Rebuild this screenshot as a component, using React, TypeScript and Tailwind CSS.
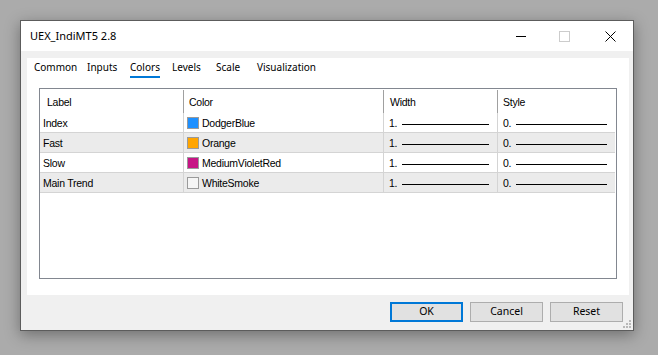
import React from "react";

const ui = { fontFamily: '"Segoe UI", "Noto Sans", "Liberation Sans", sans-serif' };
const tbl = { fontFamily: 'Tahoma, "Liberation Sans", sans-serif' };

const rows = [
  { label: "Index", color: "#1e90ff", name: "DodgerBlue" },
  { label: "Fast", color: "#ffa500", name: "Orange" },
  { label: "Slow", color: "#c71585", name: "MediumVioletRed" },
  { label: "Main Trend", color: "#f5f5f5", name: "WhiteSmoke" },
];

function LineCell({ v }: { v: string }) {
  return (
    <div className="flex items-center h-full pl-[5px] pr-[8px] pt-[3px]">
      <span className="w-[13px]">{v}</span>
      <div className="flex-1 h-px bg-black" />
    </div>
  );
}

export default function App() {
  return (
    <div className="w-[658px] h-[355px] bg-[#ababab] pl-[20px] pt-[20px] overflow-hidden">
      <div
        className="relative w-[614px] h-[311px] border border-[#5c5c5c] bg-[#f0f0f0] flex flex-col shadow-[0_4px_14px_rgba(0,0,0,0.35)]"
        style={ui}
      >
        {/* title bar */}
        <div className="h-[30px] bg-white flex items-center text-[11px] text-black">
          <span className="pl-[9px] flex-1">UEX_IndiMT5 2.8</span>
          <div className="w-[46px] h-full flex items-center justify-center pl-[6px]">
            <svg width="10" height="10"><line x1="0" y1="5.5" x2="10" y2="5.5" stroke="#000" strokeWidth="1" /></svg>
          </div>
          <div className="w-[46px] h-full flex items-center justify-center">
            <svg width="11" height="11"><rect x="0.5" y="0.5" width="10" height="10" fill="none" stroke="#cccccc" /></svg>
          </div>
          <div className="w-[46px] h-full flex items-center justify-center">
            <svg width="11" height="11"><path d="M0.5 0.5 L10.5 10.5 M10.5 0.5 L0.5 10.5" stroke="#000" strokeWidth="1" /></svg>
          </div>
        </div>

        {/* panel */}
        <div className="ml-[6px] mr-[4px] mt-[7px] h-[237px] bg-white flex flex-col">
          <div className="h-[30px] flex items-start pl-[7px] text-[10px] text-black pt-[1px]">
            <span className="leading-[16px] w-[53px]">Common</span>
            <span className="leading-[16px] w-[43px]">Inputs</span>
            <span className="w-[42px]">
              <span className="leading-[16px] inline-flex flex-col">
                <span>Colors</span>
                <span className="h-[2px] bg-[#0078d7] mt-[1px]" />
              </span>
            </span>
            <span className="leading-[16px] w-[44px]">Levels</span>
            <span className="leading-[16px] w-[41px]">Scale</span>
            <span className="leading-[16px]">Visualization</span>
          </div>
          <div className="mx-[12px] h-[191px] border border-[#828790] text-[10.5px] tracking-[-0.25px] text-black" style={tbl}>
            <div className="h-[24px] grid grid-cols-[143px_200px_114px_1fr]">
              <div className="pl-[7px] pt-[3px] flex items-center">Label</div>
              <div className="relative pl-[6px] pt-[3px] flex items-center">
                <span className="absolute left-0 top-[1px] bottom-0 w-px bg-[#a0a0a0]" />
                Color
              </div>
              <div className="relative pl-[7px] pt-[3px] flex items-center">
                <span className="absolute left-0 top-[1px] bottom-0 w-px bg-[#a0a0a0]" />
                Width
              </div>
              <div className="relative pl-[6px] pt-[3px] flex items-center">
                <span className="absolute left-0 top-[1px] bottom-0 w-px bg-[#a0a0a0]" />
                Style
              </div>
            </div>
            {rows.map((r, i) => (
              <div
                key={r.label}
                className={`h-[20px] grid grid-cols-[143px_200px_114px_1fr] border-b border-[#d4d4d4] mr-px ${i % 2 === 1 ? "bg-[#ebebeb]" : "bg-white"}`}
              >
                <div className="pl-[3px] pt-[3px] flex items-center">{r.label}</div>
                <div className="border-l border-[#d4d4d4] pl-[3px] flex items-center gap-[3px]">
                  <span
                    className="w-[12px] h-[12px] border border-[#9a9a9a]"
                    style={{ backgroundColor: r.color }}
                  />
                  <span className="pt-[3px]">{r.name}</span>
                </div>
                <div className="border-l border-[#d4d4d4]">
                  <LineCell v="1." />
                </div>
                <div className="border-l border-[#d4d4d4]">
                  <LineCell v="0." />
                </div>
              </div>
            ))}
          </div>
        </div>

        {/* buttons */}
        <div className="flex justify-end gap-[7px] mr-[10px] mt-[7px] text-[10.5px] text-black">
          <button className="w-[73px] h-[20px] bg-[#e1e1e1] border-2 border-[#0078d7] flex items-center justify-center">OK</button>
          <button className="w-[73px] h-[20px] bg-[#e1e1e1] border border-[#adadad] flex items-center justify-center">Cancel</button>
          <button className="w-[73px] h-[20px] bg-[#e1e1e1] border border-[#adadad] flex items-center justify-center">Reset</button>
        </div>

        {/* resize grip */}
        <svg className="absolute right-[1px] bottom-[1px]" width="9" height="9">
          <rect x="6" y="0" width="2" height="2" fill="#b8b8b8" />
          <rect x="3" y="3" width="2" height="2" fill="#b8b8b8" />
          <rect x="6" y="3" width="2" height="2" fill="#b8b8b8" />
          <rect x="0" y="6" width="2" height="2" fill="#b8b8b8" />
          <rect x="3" y="6" width="2" height="2" fill="#b8b8b8" />
          <rect x="6" y="6" width="2" height="2" fill="#b8b8b8" />
        </svg>
      </div>
    </div>
  );
}
